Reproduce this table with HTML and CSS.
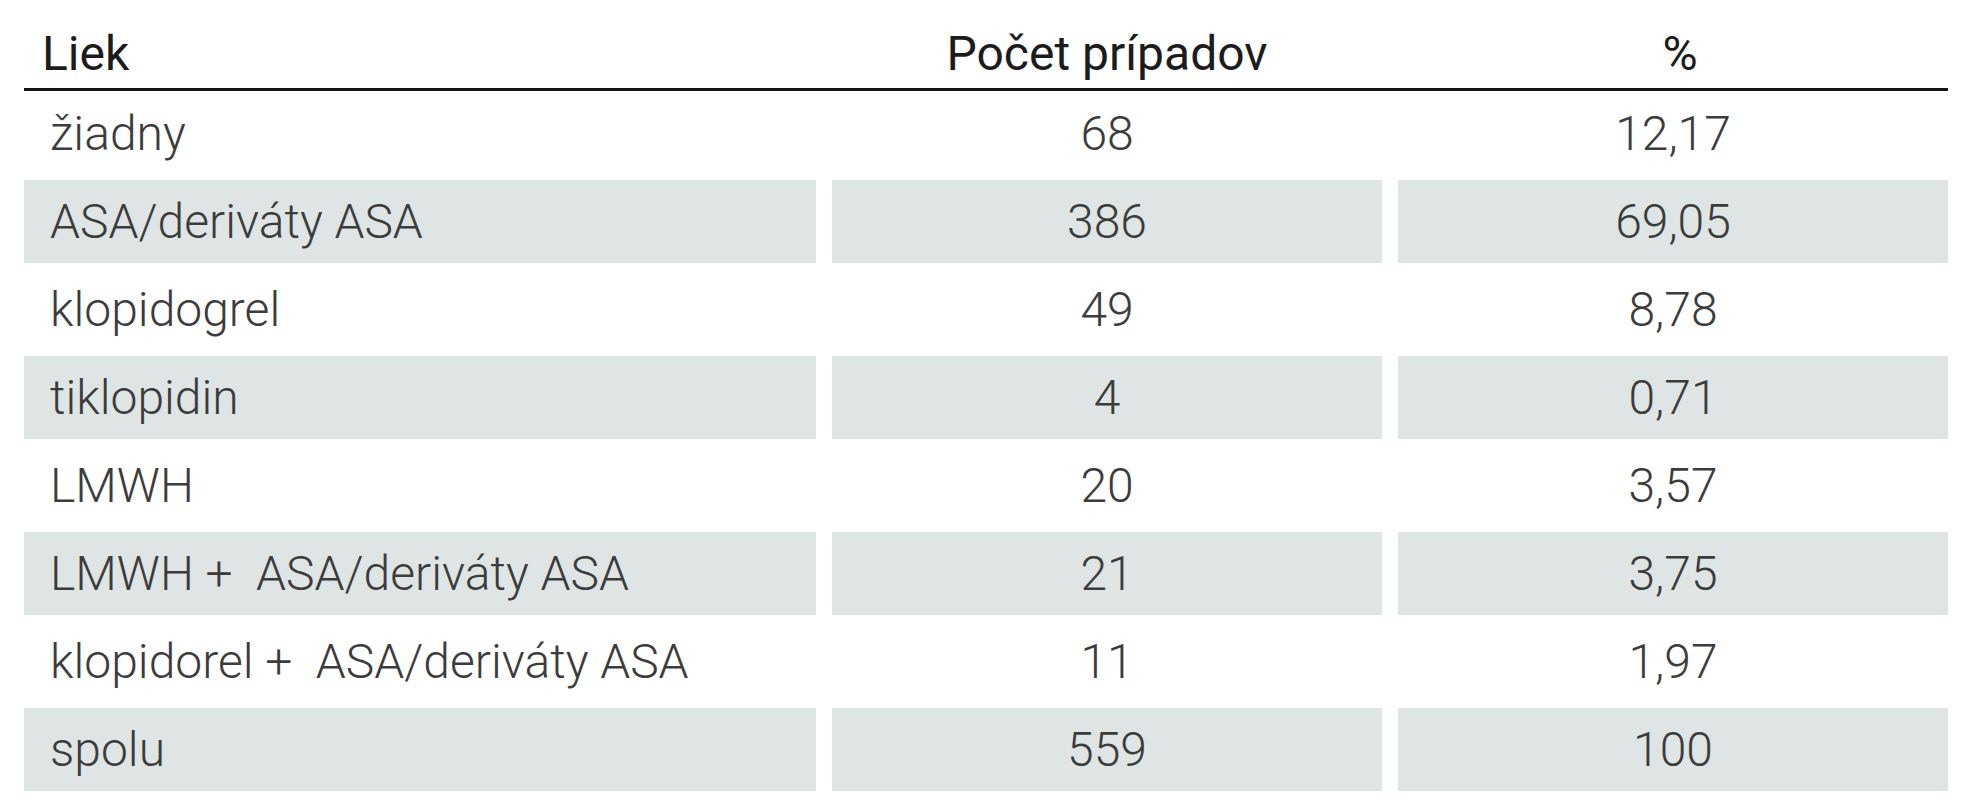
FILE: index.html
```html
<!DOCTYPE html>
<html lang="sk">
<head>
<meta charset="utf-8">
<title>Liek</title>
<link rel="stylesheet" href="styles.css">
</head>
<body>
<div class="table">
  <div class="head">
    <div class="hc left">Liek</div>
    <div class="hc">Počet prípadov</div>
    <div class="hc pct">%</div>
  </div>
  <div class="body">
    <div class="row first">
      <div class="c left">žiadny</div><div class="c">68</div><div class="c">12,17</div>
    </div>
    <div class="row alt">
      <div class="c left">ASA/deriváty ASA</div><div class="c">386</div><div class="c">69,05</div>
    </div>
    <div class="row">
      <div class="c left">klopidogrel</div><div class="c">49</div><div class="c">8,78</div>
    </div>
    <div class="row alt">
      <div class="c left">tiklopidin</div><div class="c">4</div><div class="c">0,71</div>
    </div>
    <div class="row">
      <div class="c left">LMWH</div><div class="c">20</div><div class="c">3,57</div>
    </div>
    <div class="row alt">
      <div class="c left">LMWH +&nbsp; ASA/deriváty ASA</div><div class="c">21</div><div class="c">3,75</div>
    </div>
    <div class="row">
      <div class="c left">klopidorel +&nbsp; ASA/deriváty ASA</div><div class="c">11</div><div class="c">1,97</div>
    </div>
    <div class="row alt">
      <div class="c left">spolu</div><div class="c">559</div><div class="c">100</div>
    </div>
  </div>
</div>
</body>
</html>
```

FILE: styles.css
```css
html, body {
  margin: 0;
  padding: 0;
  background: #ffffff;
}

body {
  font-family: Roboto, "Liberation Sans", "Noto Sans", sans-serif;
  font-weight: 300;
  color: #3c3c3c;
}

.table {
  margin-left: 24px;
  width: 1924px;
}

.head {
  display: grid;
  grid-template-columns: 792px 550px 550px;
  column-gap: 16px;
  height: 88px;
  border-bottom: 3px solid #151515;
  box-sizing: content-box;
}

.hc {
  font-size: 48px;
  font-weight: 400;
  color: #1c1c1c;
  line-height: 48px;
  padding-top: 30px;
  text-align: center;
}

.hc.left {
  text-align: left;
  padding-left: 18px;
}

.hc.pct {
  padding-left: 14px;
}

.row {
  display: grid;
  grid-template-columns: 792px 550px 550px;
  column-gap: 16px;
  height: 88px;
}

.row.first {
  height: 87px;
}

.c {
  font-size: 48px;
  line-height: 48px;
  display: flex;
  align-items: center;
  justify-content: center;
  margin: 2px 0 3px;
}

.c.left {
  justify-content: flex-start;
  padding-left: 26px;
}

.row.alt .c {
  background: #dfe5e5;
}
```
